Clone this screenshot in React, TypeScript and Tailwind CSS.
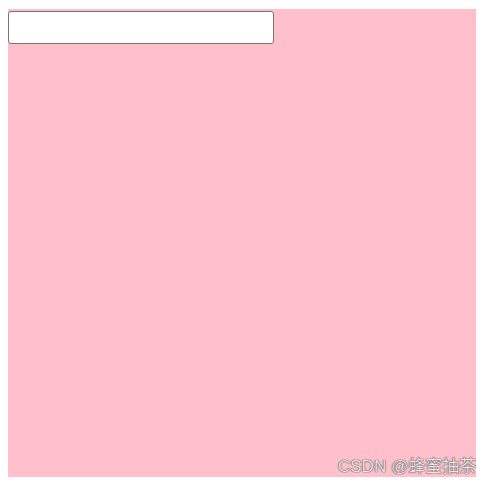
export default function App() {
  return (
    <div className="relative min-h-[488px] w-[490px] bg-white pl-2 pt-[9px]">
      <div className="h-[468px] w-[468px] bg-[#ffc0cb] pt-[2px]">
        <input
          type="text"
          className="block h-[33px] w-[266px] rounded-[3px] border border-[#767676] bg-white px-1 text-sm outline-none"
        />
      </div>
      <span
        className="absolute left-[338px] top-[456px] whitespace-nowrap text-[17px] leading-[22px] text-[#eee6e8] [text-shadow:0_0_1px_#555,0_0_1px_#555,0_0_1px_#555]"
        style={{ fontFamily: '"Liberation Sans", "Noto Sans CJK SC", sans-serif' }}
      >
        CSDN @蜂蜜抽茶
      </span>
    </div>
  )
}
